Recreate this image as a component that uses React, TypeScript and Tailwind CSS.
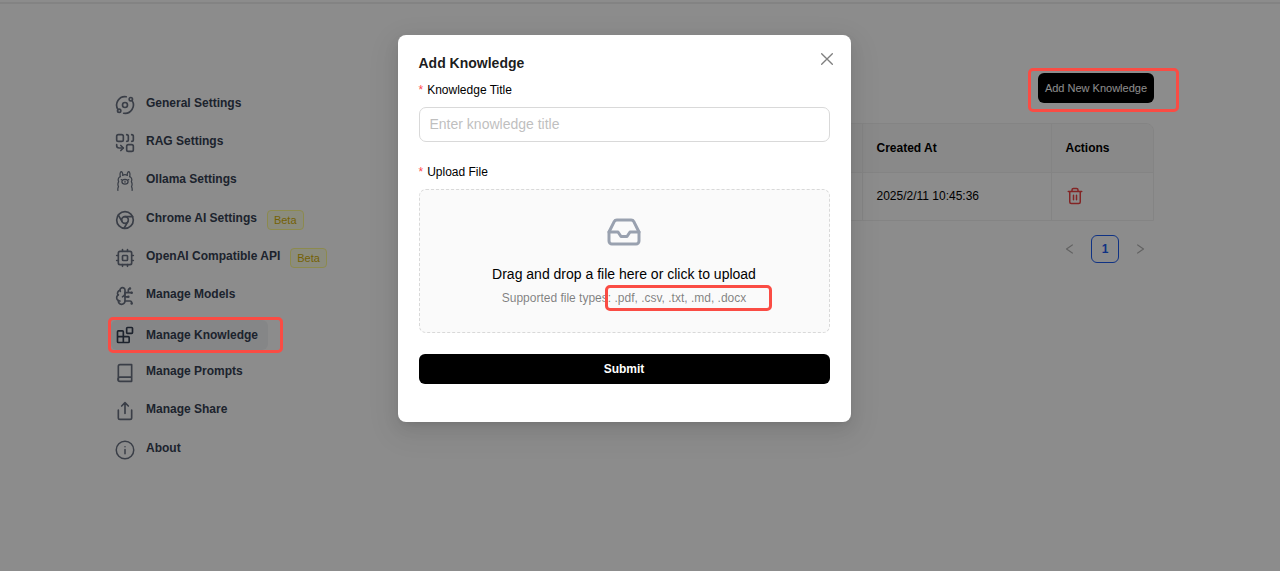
import React from "react";

type IconProps = { className?: string };

function Svg({ className, width = 2, children }: IconProps & { width?: number; children: React.ReactNode }) {
  return (
    <svg
      viewBox="0 0 24 24"
      fill="none"
      stroke="currentColor"
      strokeWidth={width}
      strokeLinecap="round"
      strokeLinejoin="round"
      aria-hidden="true"
      className={className}
    >
      {children}
    </svg>
  );
}

const Orbit = (p: IconProps) => (
  <Svg {...p}>
    <circle cx="12" cy="12" r="3" />
    <circle cx="19" cy="5" r="2" />
    <circle cx="5" cy="19" r="2" />
    <path d="M10.4 21.9a10 10 0 0 0 9.941-15.416" />
    <path d="M13.5 2.1a10 10 0 0 0-9.841 15.416" />
  </Svg>
);

const Combine = (p: IconProps) => (
  <Svg {...p}>
    <rect width="8" height="8" x="2" y="2" rx="2" />
    <path d="M14 2c1.1 0 2 .9 2 2v4c0 1.1-.9 2-2 2" />
    <path d="M20 2c1.1 0 2 .9 2 2v4c0 1.1-.9 2-2 2" />
    <path d="M10 18H5c-1.7 0-3-1.3-3-3v-1" />
    <polyline points="7 21 10 18 7 15" />
    <rect width="8" height="8" x="14" y="14" rx="2" />
  </Svg>
);

const Llama = (p: IconProps) => (
  <Svg {...p} width={1.5}>
    <path d="M6.4 6.8C5.7 4 6.2 1 7.3.8c1.300-.1 2.100 2.100 2.100 4.200" />
    <path d="M17.600 6.800c.7-2.800.2-5.800-.9-6-1.300-.1-2.100 2.100-2.100 4.200" />
    <path d="M9.200 5.200c1.700-1.100 3.900-1.100 5.600 0" />
    <path d="M6.400 6.800c-2.400.8-3.200 3.400-2 6-1.200 2-1.100 4.200-.2 6-.8 1.400-1 2.900-.7 4.400" />
    <path d="M17.600 6.800c2.400.8 3.200 3.400 2 6 1.200 2 1.100 4.200.2 6 .8 1.400 1 2.900.7 4.400" />
    <ellipse cx="12" cy="12.800" rx="3.700" ry="2.900" />
    <path d="M12 12.200v1.200M7.500 10.400h.3M16.200 10.400h.3" />
  </Svg>
);

const Chrome = (p: IconProps) => (
  <Svg {...p}>
    <circle cx="12" cy="12" r="10" />
    <circle cx="12" cy="12" r="4" />
    <path d="M21.170 8H12M3.950 6.060 8.540 14M10.880 21.940 15.460 14" />
  </Svg>
);

const Cpu = (p: IconProps) => (
  <Svg {...p}>
    <rect width="16" height="16" x="4" y="4" rx="2" />
    <rect width="6" height="6" x="9" y="9" rx="1" />
    <path d="M15 2v2M15 20v2M2 15h2M2 9h2M20 15h2M20 9h2M9 2v2M9 20v2" />
  </Svg>
);

const BrainCircuit = (p: IconProps) => (
  <Svg {...p}>
    <path d="M12 5a3 3 0 1 0-5.997.125 4 4 0 0 0-2.526 5.770 4 4 0 0 0 .556 6.588A4 4 0 1 0 12 18Z" />
    <path d="M9 13a4.500 4.500 0 0 0 3-4" />
    <path d="M6.003 5.125A3 3 0 0 0 6.401 6.500" />
    <path d="M3.477 10.896a4 4 0 0 1 .585-.396" />
    <path d="M6 18a4 4 0 0 1-1.967-.516" />
    <path d="M12 13h4M12 18h6a2 2 0 0 1 2 2v1M12 8h8M16 8V5a2 2 0 0 1 2-2" />
    <circle cx="16" cy="13" r=".5" />
    <circle cx="18" cy="3" r=".5" />
    <circle cx="20" cy="21" r=".5" />
    <circle cx="20" cy="8" r=".5" />
  </Svg>
);

const Blocks = (p: IconProps) => (
  <Svg {...p}>
    <rect width="7" height="7" x="14" y="3" rx="1" />
    <path d="M10 21V8a1 1 0 0 0-1-1H4a1 1 0 0 0-1 1v12a1 1 0 0 0 1 1h12a1 1 0 0 0 1-1v-5a1 1 0 0 0-1-1H3" />
  </Svg>
);

const Book = (p: IconProps) => (
  <Svg {...p}>
    <path d="M4 20V4a2 2 0 0 1 2-2h14v20H6a2 2 0 0 1 0-5h14" />
  </Svg>
);

const Share = (p: IconProps) => (
  <Svg {...p}>
    <path d="M4 11v9a2 2 0 0 0 2 2h12a2 2 0 0 0 2-2v-9M16 6l-4-4-4 4M12 2v13" />
  </Svg>
);

const Info = (p: IconProps) => (
  <Svg {...p} width={1.8}>
    <circle cx="12" cy="12" r="10.500" />
    <path d="M12 16.500v-5M12 8h.01" />
  </Svg>
);

const Trash = (p: IconProps) => (
  <Svg {...p}>
    <path d="M3 6h18M19 6v14a2 2 0 0 1-2 2H7a2 2 0 0 1-2-2V6M8 6V4a2 2 0 0 1 2-2h4a2 2 0 0 1 2 2v2M10 11v6M14 11v6" />
  </Svg>
);

const Inbox = (p: IconProps) => (
  <Svg {...p}>
    <path d="M22 12h-6l-2 3h-4l-2-3H2" />
    <path d="M5.450 5.110 2 12v6a2 2 0 0 0 2 2h16a2 2 0 0 0 2-2v-6l-3.450-6.890A2 2 0 0 0 16.760 4H7.240a2 2 0 0 0-1.790 1.110z" />
  </Svg>
);

const Close = (p: IconProps) => (
  <Svg {...p}>
    <path d="M4 4l16 16M20 4 4 20" />
  </Svg>
);

const Chevron = ({ d, className }: { d: string; className?: string }) => (
  <Svg className={className}>
    <path d={d} />
  </Svg>
);

const nav = [
  { label: "General Settings", Icon: Orbit },
  { label: "RAG Settings", Icon: Combine },
  { label: "Ollama Settings", Icon: Llama },
  { label: "Chrome AI Settings", Icon: Chrome, beta: true },
  { label: "OpenAI Compatible API", Icon: Cpu, beta: true },
  { label: "Manage Models", Icon: BrainCircuit },
  { label: "Manage Knowledge", Icon: Blocks, active: true },
  { label: "Manage Prompts", Icon: Book },
  { label: "Manage Share", Icon: Share },
  { label: "About", Icon: Info },
];

function Sidebar() {
  return (
    <nav className="w-[292px] shrink-0 pt-20">
      <ul>
        {nav.map(({ label, Icon, beta, active }) => (
          <li key={label} className="flex h-[38px] items-center nth-[3n]:mb-px">
            <a
              href="#"
              className={
                active
                  ? "relative mt-[3px] flex h-[30px] items-center gap-[11px] rounded-md bg-gray-100 pr-[10px] pl-1 text-[12px] font-bold text-gray-700"
                  : "flex h-[30px] items-center gap-[11px] pr-[10px] pl-1 text-[12px] font-bold text-gray-700"
              }
            >
              <Icon className={active ? "size-5 text-gray-700" : "mt-[3px] size-5 text-gray-500"} />
              {label}
              {active && (
                <span className="absolute -top-[3px] -right-[15px] -bottom-[3px] -left-[3px] z-20 rounded-[5px] border-[3px] border-[#fa4c44]" />
              )}
            </a>
            {beta && (
              <span className="mt-[3px] rounded border border-[#fffb8f] bg-[#feffe6] px-[6px] text-[11px] leading-[18px] text-[#d4b106]">
                Beta
              </span>
            )}
          </li>
        ))}
      </ul>
    </nav>
  );
}

function KnowledgePage() {
  return (
    <main className="min-w-0 flex-1 pt-[69px]">
      <div className="flex justify-end">
        <div className="relative">
          <button className="block h-[30px] rounded-md bg-black px-[7px] text-[11px] text-white">Add New Knowledge</button>
          <span className="pointer-events-none absolute -top-[5px] -right-[25px] -bottom-[9px] -left-[10px] z-20 rounded-[5px] border-[3px] border-[#fa4c44]" />
        </div>
      </div>
      <div className="mt-5 overflow-hidden rounded-t-lg border border-[#f0f0f0]">
        <table className="w-full table-fixed border-collapse text-left text-[12px] text-black">
          <thead>
            <tr className="h-12 bg-[#fafafa]">
              <td className="border-r border-[#f0f0f0]" />
              <th className="w-[189px] border-r border-[#f0f0f0] px-[14px]">Created At</th>
              <th className="w-[102px] px-[14px]">Actions</th>
            </tr>
          </thead>
          <tbody>
            <tr className="h-12 border-t border-[#f0f0f0]">
              <td className="border-r border-[#f0f0f0]" />
              <td className="border-r border-[#f0f0f0] px-[14px]">2025/2/11 10:45:36</td>
              <td className="px-[14px]">
                <button aria-label="Delete" className="block text-[#ef4444]">
                  <Trash className="size-[18px]" />
                </button>
              </td>
            </tr>
          </tbody>
        </table>
      </div>
      <div className="mt-[14px] flex items-center justify-end gap-[14px] pr-[7px]">
        <button aria-label="Previous page" className="text-black/30">
          <Chevron className="size-[14px]" d="M16 5 6 12l10 7" />
        </button>
        <button className="size-7 rounded-md border border-[#1d5cf0] text-[12px] font-bold text-[#1d5cf0]">1</button>
        <button aria-label="Next page" className="text-black/30">
          <Chevron className="size-[14px]" d="m8 5 10 7-10 7" />
        </button>
      </div>
    </main>
  );
}

function AddKnowledgeDialog() {
  return (
    <div className="absolute inset-0 z-10 flex items-start justify-center bg-black/45 pt-[35px] pr-8">
      <div
        role="dialog"
        aria-labelledby="dialog-title"
        className="relative w-full max-w-[453px] rounded-lg bg-white px-[21px] pt-[17px] pb-[38px] shadow-[0_6px_16px_0_rgba(0,0,0,0.08),0_3px_6px_-4px_rgba(0,0,0,0.12),0_9px_28px_8px_rgba(0,0,0,0.05)]"
      >
        <button aria-label="Close" className="absolute top-4 right-4 text-black/50">
          <Close className="size-4" />
        </button>
        <h2 id="dialog-title" className="text-[14px] leading-[22px] font-bold text-black/90">
          Add Knowledge
        </h2>
        <form>
          <label htmlFor="title" className="mt-[5px] block text-[12px] leading-[22px] text-black">
            <span className="mr-1 text-[#ff4d4f]">*</span>Knowledge Title
          </label>
          <input
            id="title"
            placeholder="Enter knowledge title"
            className="mt-[6px] block h-[35px] w-full rounded-[7px] border border-[#d9d9d9] px-[10px] pb-[2px] text-[14px] placeholder:text-[#bfbfbf]"
          />
          <label htmlFor="file" className="mt-[19px] block text-[12px] leading-[22px] text-black">
            <span className="mr-1 text-[#ff4d4f]">*</span>Upload File
          </label>
          <label
            htmlFor="file"
            className="mt-[6px] flex flex-col items-center rounded-[7px] border border-dashed border-[#d9d9d9] bg-[#fafafa] pt-6 pb-[23px]"
          >
            <Inbox className="size-9 text-gray-400" />
            <span className="mt-[13px] text-[14px] leading-[22px] text-black">Drag and drop a file here or click to upload</span>
            <span className="mt-[2px] text-[12px] leading-[22px] text-black/50">
              Supported file types:{" "}
              <span className="relative inline-block">
                .pdf, .csv, .txt, .md, .docx
                <span className="absolute -top-[2px] -right-[26px] -bottom-[2px] -left-[9px] rounded-[5px] border-[3px] border-[#fa4c44]" />
              </span>
            </span>
            <input id="file" type="file" className="sr-only" />
          </label>
          <button
            type="submit"
            className="mt-[21px] block h-[30px] w-full rounded-md bg-black text-[12px] font-bold text-white"
          >
            Submit
          </button>
        </form>
      </div>
    </div>
  );
}

export default function App() {
  return (
    <div className="relative min-h-screen bg-white font-['Liberation_Sans',Arial,sans-serif]">
      <div className="h-1 border-b-2 border-[#eeeeee]" />
      <div className="flex pr-[126px] pl-[111px]">
        <Sidebar />
        <KnowledgePage />
      </div>
      <AddKnowledgeDialog />
    </div>
  );
}
